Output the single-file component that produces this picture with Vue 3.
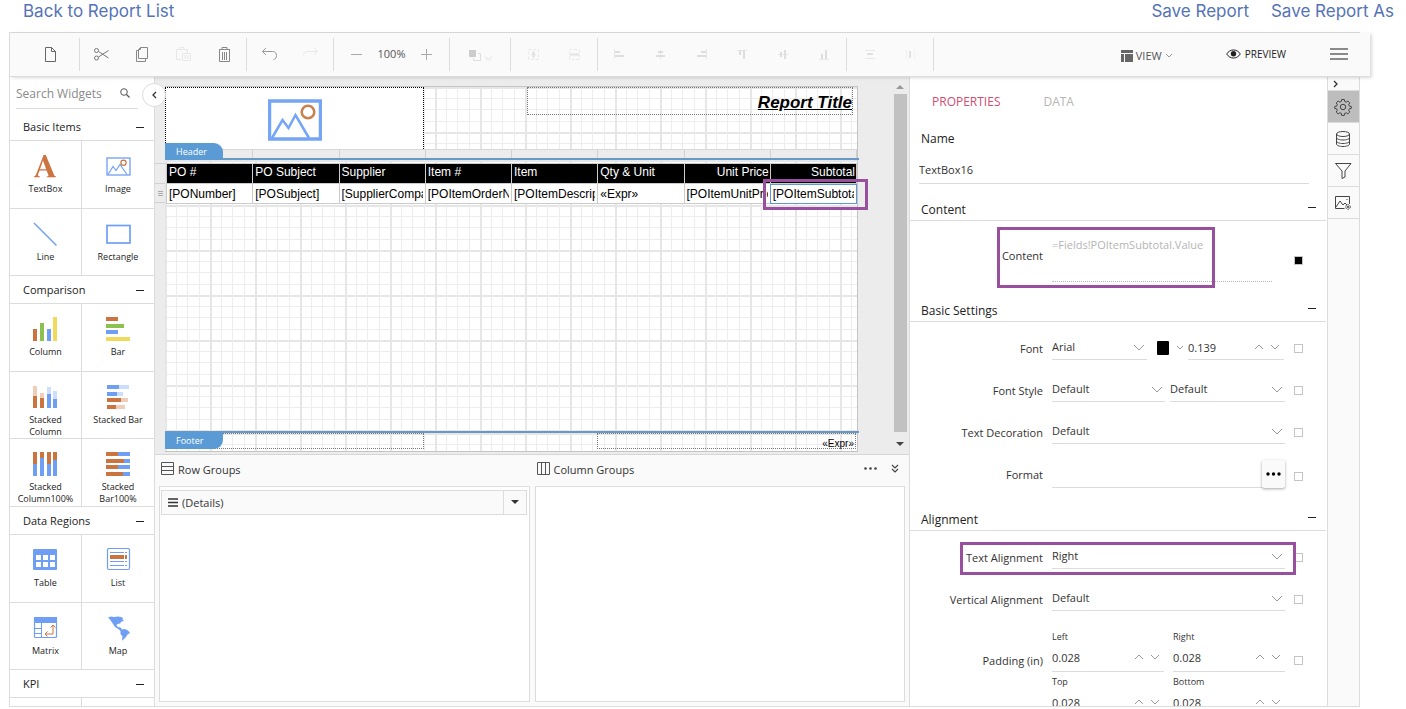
<script setup>
import { ref } from 'vue'

const B = '#6f9ff5'
const O = '#cc7440'

const svgBars = (items) => items.map(([x, y, w, h, c]) => `<rect x="${x}" y="${y}" width="${w}" height="${h}" fill="${c}"/>`).join('')

const widgetSections = [
  {
    title: 'Basic Items',
    items: [
      { name: 'TextBox', icon: `<path d="M10.600 1h2.200l8.400 20.200c.3.8.8 1.100 1.800 1.200v.9h-9.200v-.9c1.500 0 2-.4 1.500-1.600l-1.700-4.200H6.600L5.200 20c-.6 1.600-.1 2.300 1.800 2.400v.9H.8v-.9c1.300-.2 1.800-.8 2.500-2.400zM10 6.600l-3 8.600h6.200z" fill="${O}"/>` },
      { name: 'Image', icon: `<g fill="none" stroke="${B}"><rect x="1" y="4" width="23" height="17" stroke-width="1.300"/><path d="M2 20.500l5-8 3 4 4-6 7 10" stroke-width="1.200"/></g><circle cx="17.500" cy="8.800" r="2.600" fill="none" stroke="${O}" stroke-width="1.200"/>` },
      { name: 'Line', icon: `<path d="M1 1L23.500 23.500" stroke="${B}" stroke-width="1.500"/>` },
      { name: 'Rectangle', icon: `<rect x="1" y="3.500" width="23" height="17.500" fill="none" stroke="${B}" stroke-width="1.700"/>` }
    ]
  },
  {
    title: 'Comparison',
    items: [
      { name: 'Column', icon: svgBars([[0, 12, 4, 12, O], [7, 6, 4, 18, '#8cc152'], [14, 12, 4, 12, B], [20, 0, 4, 24, '#f1d95b']]) },
      { name: 'Bar', icon: svgBars([[0, 0, 12, 4, O], [0, 7, 18, 4, '#8cc152'], [0, 13, 12, 4, B], [0, 20, 24, 4, '#f1d95b']]) },
      { name: 'Stacked Column', icon: svgBars([[0, 1, 4, 10, '#efcdb9'], [0, 11, 4, 12, O], [7, 8, 4, 5, '#efcdb9'], [7, 13, 4, 10, O], [14, 2, 4, 8, '#cdddfc'], [14, 9, 4, 14, B], [20, 6, 4, 8, '#cdddfc'], [20, 14, 4, 9, B]]) },
      { name: 'Stacked Bar', icon: svgBars([[1, 0, 12, 4, B], [13, 0, 10, 4, '#cdddfc'], [1, 7, 10, 4, B], [11, 7, 6, 4, '#cdddfc'], [1, 13, 14, 4, O], [15, 13, 7, 4, '#efcdb9'], [1, 20, 9, 4, O], [10, 20, 9, 4, '#efcdb9']]) },
      { name: 'Stacked Column100%', icon: svgBars([[0, 0, 4, 12, O], [0, 12, 4, 12, B], [7, 0, 4, 6, O], [7, 6, 4, 18, B], [14, 0, 4, 12, O], [14, 12, 4, 12, B], [20, 0, 4, 8, O], [20, 8, 4, 16, B]]) },
      { name: 'Stacked Bar100%', icon: svgBars([[0, 0, 12, 4, O], [12, 0, 12, 4, B], [0, 7, 18, 4, O], [18, 7, 6, 4, B], [0, 13, 12, 4, O], [12, 13, 12, 4, B], [0, 20, 17, 4, O], [17, 20, 7, 4, B]]) }
    ]
  },
  {
    title: 'Data Regions',
    items: [
      { name: 'Table', icon: `<rect x="0" y="1" width="24" height="21" rx="1" fill="${B}"/>` + svgBars([[3, 7, 5, 5, '#fff'], [10, 7, 5, 5, '#fff'], [17, 7, 5, 5, '#fff'], [3, 14, 5, 5, '#fff'], [10, 14, 5, 5, '#fff'], [17, 14, 5, 5, '#fff']]) },
      { name: 'List', icon: `<rect x="1.500" y="0.500" width="22" height="21" rx="1.500" fill="none" stroke="${B}" stroke-width="1.200"/>` + svgBars([[4, 4, 14, 1, B], [19, 4, 2, 1, B], [4, 7, 14, 4, O], [19, 7, 2, 4, O], [4, 13, 14, 1, B], [19, 13, 2, 1, B], [4, 17, 14, 1, B], [19, 17, 2, 1, B]]) },
      { name: 'Matrix', icon: `<rect x="1.500" y="1.500" width="22" height="20" rx="1" fill="none" stroke="${B}" stroke-width="1.200"/><path d="M1 1h23v6H1z" fill="${B}"/><path d="M8.500 7v15M1 12.500h7.500M1 17.500h7.500" stroke="${B}"/><path d="M20 9v9h-8M17.500 11.500L20 9l2.500 2.500M14.500 15.500L12 18l2.500 2.500" fill="none" stroke="${O}"/>` },
      { name: 'Map', icon: `<path d="M2 1.500l3-1 3 .5 4-.5 3 .5 2 1-.5 1.500 1.500 1.500-2.500.5-1.500 2-2.500.5-1 1.500 1.500 1.500 2.500.5 1.500 2 3-.5 3 1.500 2 2.500-2.500 1.500-1.500 2.500-3 3-1 .5.500-4-2-2.500v-3l-1.500-1.500-4-2.500-2-3L4 3.500z" fill="${B}"/>` }
    ]
  },
  { title: 'KPI', items: [{ name: '', icon: '' }, { name: '', icon: '' }] }
]

const toolGroups = [
  { cls: 'first', tools: [{ name: 'New', icon: '<path d="M3.500 1.500h6l4 4v10h-10zM9.500 1.500v4h4" stroke="#666"/>' }] },
  {
    cls: 'edit',
    tools: [
      { name: 'Cut', icon: '<g stroke="#777"><circle cx="3.500" cy="4.500" r="2"/><circle cx="3.500" cy="12" r="2"/><path d="M5.500 5.500l10 6.500M5.500 11l10-6.500"/></g>' },
      { name: 'Copy', icon: '<path d="M6.500 1.500h7v11h-9v-9zM6.500 1.500v2h-2M4.500 4.500h-2v11h9v-3" stroke="#888"/>' },
      { name: 'Paste', icon: '<path d="M6 13.500H1.500v-10h11V7M5 3.500v-2h4v2M7.500 7.500h8v7h-8zM9 10h5M9 12h5" stroke="#e8e8e8"/>' },
      { name: 'Delete', icon: '<path d="M3 3.500h11M6 3.500v-2h5v2M3.500 4v11.500h10V4M6.500 6v8M8.500 6v8M10.500 6v8" stroke="#888"/>' }
    ]
  },
  {
    tools: [
      { name: 'Undo', icon: '<path d="M5 2L1.500 5.500 5 9M1.500 5.500h10c3 0 4 2 4 4s-1 4-3 4" stroke="#999"/>' },
      { name: 'Redo', icon: '<path d="M12 2l3.500 3.500L12 9M15.500 5.500h-10c-3 0-4 2-4 4" stroke="#e8e8e8"/>' }
    ]
  },
  {
    zoom: true,
    tools: [
      { name: 'Zoom out', icon: '<path d="M3 8.500h11" stroke="#aaa"/>' },
      { name: 'Zoom in', icon: '<path d="M3 8.500h11M8.500 3v11" stroke="#aaa"/>' }
    ]
  },
  { cls: 'order', tools: [{ name: 'Order', icon: '<path d="M1 4h7v7H1z" fill="#ccc"/><path d="M10 7.500h2.500v7h-7V12M17 10.500l3.500 3.500 3.500-3.500" stroke="#dedede"/>', wide: true }] },
  {
    tools: [
      { name: 'Center horizontally', icon: '<path d="M3.500 3.500h10v10h-10z" stroke="#e8e8e8" stroke-dasharray="3 2"/><path d="M8.500 5v7M6.500 8.500h4" stroke="#e2e2e2" stroke-width="2"/>' },
      { name: 'Center vertically', icon: '<path d="M3.500 3.500h10v10h-10z" stroke="#e8e8e8" stroke-dasharray="3 2"/><path d="M4 8.500h9" stroke="#e2e2e2" stroke-width="2"/>' }
    ]
  },
  {
    cls: 'six',
    tools: [
      { name: 'Align left', icon: '<path d="M3.500 3v10" stroke="#e8e8e8"/><path d="M4 6h5M4 10h9" stroke="#dedede" stroke-width="2"/>' },
      { name: 'Align center', icon: '<path d="M8.500 4v9" stroke="#e8e8e8"/><path d="M6 6h5M4 10h9" stroke="#dedede" stroke-width="2"/>' },
      { name: 'Align right', icon: '<path d="M13.500 3v10" stroke="#e8e8e8"/><path d="M8 6h5M4 10h9" stroke="#dedede" stroke-width="2"/>' },
      { name: 'Align top', icon: '<path d="M3 4.500h10" stroke="#e8e8e8"/><path d="M6 4v5M10 4v9" stroke="#dedede" stroke-width="2"/>' },
      { name: 'Align middle', icon: '<path d="M3 8.500h11" stroke="#e8e8e8"/><path d="M6 6v5M10 4v9" stroke="#dedede" stroke-width="2"/>' },
      { name: 'Align bottom', icon: '<path d="M3 13.500h10" stroke="#e8e8e8"/><path d="M6 8v5M10 4v9" stroke="#dedede" stroke-width="2"/>' }
    ]
  },
  {
    tools: [
      { name: 'Distribute vertically', icon: '<path d="M4 4.500h10M4 12.500h10" stroke="#e8e8e8"/><path d="M6 8h6" stroke="#e2e2e2" stroke-width="2"/>' },
      { name: 'Distribute horizontally', icon: '<path d="M4.500 4v9M12.500 4v9" stroke="#f0f0f0"/><path d="M8 5v7" stroke="#e2e2e2" stroke-width="2"/>' }
    ]
  }
]

const columns = [
  { head: 'PO #', value: '[PONumber]' },
  { head: 'PO Subject', value: '[POSubject]' },
  { head: 'Supplier', value: '[SupplierCompa' },
  { head: 'Item #', value: '[POItemOrderN' },
  { head: 'Item', value: '[POItemDescrip' },
  { head: 'Qty & Unit', value: '«Expr»' },
  { head: 'Unit Price', value: '[POItemUnitPric', right: true },
  { head: 'Subtotal', value: '[POItemSubtota', right: true, selected: true }
]

const sideTabs = [
  { name: 'Properties', active: true, icon: '<circle cx="9" cy="9" r="2.700"/><path d="M7.700 1.500h2.600l.4 2 1.500.6 1.700-1.100 1.900 1.900-1.100 1.700.6 1.500 2 .4v1.900l-2 .4-.6 1.500 1.100 1.700-1.900 1.900-1.700-1.100-1.500.6-.4 2H7.700l-.4-2-1.500-.6-1.700 1.100-1.900-1.900 1.100-1.700-.6-1.500-2-.4V8.500l2-.4.6-1.500-1.100-1.700 1.900-1.900 1.700 1.100 1.500-.6z"/>' },
  { name: 'Data', icon: '<ellipse cx="9" cy="4" rx="6.500" ry="2.500"/><path d="M2.500 4v10c0 1.400 2.900 2.500 6.500 2.500s6.500-1.100 6.500-2.500V4M2.500 7.500C2.500 9 5.400 10 9 10s6.500-1 6.500-2.500M2.500 11c0 1.500 2.900 2.500 6.500 2.500s6.500-1 6.500-2.500"/>' },
  { name: 'Filters', icon: '<path d="M1.500 1.500h15.500l-6 7.500v6l-3 1.500V9z"/>' },
  { name: 'Image manager', icon: '<path d="M10.500 14.500H1.500v-12h14V10M2 13l4-6 3 4 2-2 2 2"/><path d="M12.500 5.500h1"/><circle cx="14" cy="13" r="2.300" stroke-dasharray="1.500 .8"/><circle cx="14" cy="13" r=".8"/>' }
]

const name = ref('TextBox16')
const content = ref('=Fields!POItemSubtotal.Value')
const fontSize = ref('0.139')
const format = ref('')
const padding = ref([
  { side: 'Left', value: '0.028' },
  { side: 'Right', value: '0.028' },
  { side: 'Top', value: '0.028' },
  { side: 'Bottom', value: '0.028' }
])
</script>

<template>
  <div class="page">
    <nav class="links">
      <a href="#">Back to Report List</a>
      <a href="#" class="save">Save Report</a>
      <a href="#">Save Report As</a>
    </nav>

    <main class="designer">
      <header class="toolbar">
        <div v-for="(group, g) in toolGroups" :key="g" class="group" :class="group.cls">
          <template v-for="(tool, t) in group.tools" :key="tool.name">
            <span v-if="group.zoom && t === 1" class="zoom">100%</span>
            <button class="tool" :aria-label="tool.name">
              <svg :width="tool.wide ? 26 : 17" height="17" :viewBox="tool.wide ? '0 0 26 17' : '0 0 17 17'" fill="none" v-html="tool.icon"></svg>
            </button>
          </template>
        </div>
        <button class="view">
          <svg width="12" height="12" viewBox="0 0 12 12"><path d="M0 0h12v3H0zM0 4h3v8H0zM4 4h8v8H4z" fill="#666" /></svg>
          <span>VIEW</span>
          <svg width="8" height="6" viewBox="0 0 8 6" fill="none"><path d="M1 1l3 3 3-3" stroke="#999" /></svg>
        </button>
        <button class="preview">
          <svg width="15" height="10" viewBox="0 0 15 10" fill="none"><path d="M.7 5C4-.4 11-.4 14.300 5 11 10.400 4 10.400.7 5z" stroke="#222" /><circle cx="7.500" cy="4.700" r="2.700" fill="#222" /></svg>
          <span>PREVIEW</span>
        </button>
        <button class="menu" aria-label="Menu">
          <svg width="18" height="12" viewBox="0 0 18 12"><path d="M0 1h18M0 6h18M0 11h18" stroke="#666" stroke-width="1.500" /></svg>
        </button>
      </header>

      <div class="body">
        <aside class="widgets">
          <div class="widget-list">
            <div class="search">
              <input type="text" placeholder="Search Widgets" aria-label="Search Widgets" />
              <svg width="10" height="10" viewBox="0 0 10 10" fill="none" stroke="#555"><circle cx="4" cy="4" r="3.300" /><path d="M6.500 6.500L9.500 9.500" stroke-width="1.300" /></svg>
            </div>
            <section v-for="section in widgetSections" :key="section.title">
              <button class="section-head"><span>{{ section.title }}</span><i class="minus"></i></button>
              <div class="cells">
                <div v-for="(item, i) in section.items" :key="i" class="cell">
                  <svg width="25" height="25" viewBox="0 0 25 25" v-html="item.icon"></svg>
                  <span>{{ item.name }}</span>
                </div>
              </div>
            </section>
          </div>
          <button class="collapse" aria-label="Collapse widgets">
            <svg width="6" height="8" viewBox="0 0 6 8" fill="none"><path d="M5 1L2 4l3 3" stroke="#333" stroke-width="1.300" /></svg>
          </button>
        </aside>

        <div class="center">
          <div class="canvas">
            <div class="gutter"><div class="row-handles"><span></span><span class="grip"></span></div></div>
            <div class="paper">
              <div class="band header-band grid">
                <div class="logo">
                  <svg width="54" height="42" viewBox="0 0 54 42" fill="none">
                    <rect x="1.500" y="2" width="51" height="38" stroke="#76a5f5" stroke-width="3.500" />
                    <path d="M4 39l10.500-18 6 8L27.500 16 41 39" stroke="#76a5f5" stroke-width="2.500" />
                    <circle cx="40" cy="13" r="6.300" stroke="#cc7f4b" stroke-width="2.500" />
                  </svg>
                </div>
                <div class="title">Report Title</div>
                <span class="tab top-tab">Header</span>
              </div>
              <div class="col-handles"><span v-for="c in columns" :key="c.head"></span></div>
              <div class="rule"></div>
              <div class="band body-band grid">
                <table>
                  <thead>
                    <tr><th v-for="c in columns" :key="c.head" :class="{ right: c.right }">{{ c.head }}</th></tr>
                  </thead>
                  <tbody>
                    <tr>
                      <td v-for="c in columns" :key="c.head" :class="{ selected: c.selected }">
                        <div>{{ c.value }}</div>
                        <i v-if="c.selected" class="mark cell-mark"></i>
                      </td>
                    </tr>
                  </tbody>
                </table>
              </div>
              <div class="rule"></div>
              <div class="band footer-band grid">
                <div class="foot-left"></div>
                <div class="foot-right">«Expr»</div>
                <span class="tab bottom-tab">Footer</span>
              </div>
            </div>
            <div class="scrollbar">
              <svg width="8" height="5" viewBox="0 0 8 5"><path d="M0 5l4-4 4 4z" fill="#999" /></svg>
              <i></i>
              <svg width="8" height="5" viewBox="0 0 8 5"><path d="M0 0l4 4 4-4z" fill="#444" /></svg>
            </div>
          </div>

          <div class="groups">
            <section class="group-pane">
              <h2>
                <svg width="13" height="13" viewBox="0 0 13 13" fill="none" stroke="#555"><path d="M.5.5h12v12H.5zM.5 4.500h12M.5 8.500h12" /></svg>
                <span>Row Groups</span>
              </h2>
              <div class="group-box">
                <div class="detail">
                  <svg width="10" height="9" viewBox="0 0 10 9"><path d="M0 1h10M0 4.500h10M0 8h10" stroke="#333" stroke-width="1.600" /></svg>
                  <span>(Details)</span>
                  <button aria-label="Group options"><svg width="8" height="5" viewBox="0 0 8 5"><path d="M0 0l4 4 4-4z" fill="#333" /></svg></button>
                </div>
              </div>
            </section>
            <section class="group-pane">
              <h2>
                <svg width="13" height="13" viewBox="0 0 13 13" fill="none" stroke="#555"><path d="M.5.5h12v12H.5zM4.500.5v12M8.500.5v12" /></svg>
                <span>Column Groups</span>
                <button class="more" aria-label="More"><svg width="13" height="3" viewBox="0 0 13 3" fill="#444"><circle cx="1.500" cy="1.500" r="1.300" /><circle cx="6.500" cy="1.500" r="1.300" /><circle cx="11.500" cy="1.500" r="1.300" /></svg></button>
                <button aria-label="Collapse groups"><svg width="8" height="9" viewBox="0 0 8 9" fill="none" stroke="#444" stroke-width="1.200"><path d="M1 1l3 3 3-3M1 5l3 3 3-3" /></svg></button>
              </h2>
              <div class="group-box"></div>
            </section>
          </div>
        </div>

        <aside class="properties">
          <div class="tabs">
            <button class="on">PROPERTIES</button>
            <button>DATA</button>
          </div>
          <label class="name-label" for="name">Name</label>
          <input id="name" v-model="name" class="name-input" type="text" />

          <button class="prop-head"><span>Content</span><i class="minus"></i></button>
          <div class="props content-props">
            <div class="row content-row">
              <label for="content">Content</label>
              <textarea id="content" v-model="content"></textarea>
              <input type="checkbox" checked aria-label="Content expression" />
              <i class="mark content-mark"></i>
            </div>
          </div>

          <button class="prop-head"><span>Basic Settings</span><i class="minus"></i></button>
          <div class="props basic-props">
            <div class="row">
              <label for="font">Font</label>
              <div class="controls font-controls">
                <span class="select"><select id="font"><option>Arial</option></select><svg width="12" height="7" viewBox="0 0 12 7"><path d="M1 1l5 5 5-5" /></svg></span>
                <button class="swatch" aria-label="Font color"><i></i><svg width="8" height="5" viewBox="0 0 8 5"><path d="M1 1l3 3 3-3" /></svg></button>
                <span class="spin"><input v-model="fontSize" type="text" aria-label="Font size" /><svg width="26" height="7" viewBox="0 0 26 7"><path d="M1 5l4-4 4 4M17 1l4 4 4-4" /></svg></span>
              </div>
              <input type="checkbox" aria-label="Font expression" />
            </div>
            <div class="row">
              <label for="style">Font Style</label>
              <div class="controls style-controls">
                <span class="select"><select id="style"><option>Default</option></select><svg width="12" height="7" viewBox="0 0 12 7"><path d="M1 1l5 5 5-5" /></svg></span>
                <span class="select"><select aria-label="Font weight"><option>Default</option></select><svg width="12" height="7" viewBox="0 0 12 7"><path d="M1 1l5 5 5-5" /></svg></span>
              </div>
              <input type="checkbox" aria-label="Font style expression" />
            </div>
            <div class="row">
              <label for="decoration">Text Decoration</label>
              <div class="controls">
                <span class="select"><select id="decoration"><option>Default</option></select><svg width="12" height="7" viewBox="0 0 12 7"><path d="M1 1l5 5 5-5" /></svg></span>
              </div>
              <input type="checkbox" aria-label="Text decoration expression" />
            </div>
            <div class="row format-row">
              <label for="format">Format</label>
              <div class="controls format-controls">
                <input id="format" v-model="format" type="text" />
                <button class="dots" aria-label="Edit format"><svg width="15" height="4" viewBox="0 0 15 4"><circle cx="2" cy="2" r="1.700" /><circle cx="7.500" cy="2" r="1.700" /><circle cx="13" cy="2" r="1.700" /></svg></button>
              </div>
              <input type="checkbox" aria-label="Format expression" />
            </div>
          </div>

          <button class="prop-head"><span>Alignment</span><i class="minus"></i></button>
          <div class="props">
            <div class="row">
              <label for="align">Text Alignment</label>
              <div class="controls">
                <span class="select"><select id="align"><option>Right</option></select><svg width="12" height="7" viewBox="0 0 12 7"><path d="M1 1l5 5 5-5" /></svg></span>
              </div>
              <input type="checkbox" aria-label="Text alignment expression" />
              <i class="mark align-mark"></i>
            </div>
            <div class="row">
              <label for="valign">Vertical Alignment</label>
              <div class="controls">
                <span class="select"><select id="valign"><option>Default</option></select><svg width="12" height="7" viewBox="0 0 12 7"><path d="M1 1l5 5 5-5" /></svg></span>
              </div>
              <input type="checkbox" aria-label="Vertical alignment expression" />
            </div>
            <div class="row padding-row">
              <label for="pad-Left">Padding (in)</label>
              <div class="pads">
                <div v-for="pad in padding" :key="pad.side" class="pad">
                  <label :for="'pad-' + pad.side">{{ pad.side }}</label>
                  <span class="spin"><input :id="'pad-' + pad.side" v-model="pad.value" type="text" /><svg width="26" height="7" viewBox="0 0 26 7"><path d="M1 5l4-4 4 4M17 1l4 4 4-4" /></svg></span>
                </div>
              </div>
              <input type="checkbox" aria-label="Padding expression" />
            </div>
          </div>
        </aside>

        <nav class="strip">
          <button class="expand" aria-label="Collapse properties"><svg width="6" height="8" viewBox="0 0 6 8" fill="none"><path d="M1 1l3 3-3 3" stroke="#333" stroke-width="1.300" /></svg></button>
          <button v-for="tab in sideTabs" :key="tab.name" class="side" :class="{ active: tab.active }" :aria-label="tab.name">
            <svg width="18" height="18" viewBox="0 0 18 18" fill="none" stroke="#444" v-html="tab.icon"></svg>
          </button>
        </nav>
      </div>
    </main>
  </div>
</template>

<style>
body {
  background: #fff;
}
</style>

<style scoped>
* {
  box-sizing: border-box;
}
button,
input,
select,
textarea {
  margin: 0;
  padding: 0;
  border: 0;
  border-radius: 0;
  background: none;
  color: inherit;
  font: inherit;
  outline: 0;
}
svg {
  display: block;
  flex: none;
}
.page {
  display: flex;
  flex-direction: column;
  height: 100vh;
  font: 11px/16px "Open Sans", "Noto Sans", sans-serif;
  color: #333;
}
.links {
  display: flex;
  gap: 22px;
  height: 32px;
  padding: 0 12px 0 23px;
  font: 17px/22px Inter, sans-serif;
}
.links a {
  color: #5573b7;
  text-decoration: none;
}
.save {
  margin-left: auto;
}
.designer {
  flex: 1;
  min-height: 0;
  display: flex;
  flex-direction: column;
  margin: 0 46px 2px 9px;
  border: 1px solid #dcdcdc;
}
.toolbar {
  position: relative;
  z-index: 2;
  display: flex;
  align-items: center;
  flex: none;
  height: 44px;
  margin-right: -11px;
  padding-bottom: 1px;
  background: #fafafa;
  border-bottom: 1px solid #dcdcdc;
  box-shadow: 2px 1px 3px rgba(0, 0, 0, 0.15);
}
.group {
  display: flex;
  align-items: center;
  height: 33px;
  padding: 0 2px;
  border-right: 1px solid #dcdcdc;
}
.first {
  padding: 0 8px 0 20px;
}
.edit,
.six {
  padding: 0 1px;
}
.order {
  padding: 0 1px 0 18px;
}
.tool {
  display: flex;
  justify-content: center;
  width: 41px;
}
.order .tool {
  justify-content: flex-start;
}
.zoom {
  width: 29px;
  text-align: center;
  white-space: nowrap;
  color: #555;
}
.view,
.preview {
  display: flex;
  align-items: center;
  gap: 4px;
  color: #555;
}
.view {
  margin-left: auto;
  padding-top: 3px;
  gap: 3px;
}
.preview {
  margin: 0 44px 0 53px;
  color: #222;
  font-size: 10px;
}
.menu {
  margin-right: 22px;
}
.body {
  flex: 1;
  min-height: 0;
  display: flex;
}
.widgets {
  position: relative;
  z-index: 1;
  flex: none;
  width: 145px;
  border-right: 1px solid #dcdcdc;
}
.widget-list {
  height: 100%;
  overflow: hidden;
}
.search {
  display: flex;
  align-items: center;
  width: 122px;
  height: 32px;
  margin: 0 0 3px 6px;
  padding-right: 8px;
  border-bottom: 1px solid #dcdcdc;
}
.search input {
  flex: 1;
  min-width: 0;
  padding-top: 2px;
  font-size: 12px;
}
.search input::placeholder {
  color: #8a8a8a;
}
.section-head {
  display: flex;
  align-items: center;
  justify-content: space-between;
  width: 100%;
  height: 28px;
  padding: 2px 10px 0 13px;
}
.section-head,
.prop-head {
  color: #222;
}
.minus {
  width: 8px;
  height: 1px;
  background: #222;
}
.cells {
  display: grid;
  grid-template-columns: 1fr 1fr;
  grid-auto-rows: 68px 67px;
  border-bottom: 1px solid #dcdcdc;
  margin-bottom: -1px;
}
.cell {
  display: flex;
  flex-direction: column;
  align-items: center;
  gap: 4px;
  padding: 13px 2px 0;
  border-top: 1px solid #dcdcdc;
  font-size: 9px;
  line-height: 12px;
  text-align: center;
  color: #222;
}
.cell:nth-child(odd) {
  border-right: 1px solid #dcdcdc;
}
.cell span {
  max-width: 60px;
}
.collapse {
  position: absolute;
  top: 6px;
  right: -12px;
  display: flex;
  align-items: center;
  justify-content: center;
  width: 24px;
  height: 24px;
  border: 1px solid #dcdcdc;
  border-radius: 12px;
  background: #fff;
}
.center {
  flex: 1;
  min-width: 0;
  display: flex;
  flex-direction: column;
  border-right: 1px solid #dcdcdc;
}
.canvas {
  flex: 1;
  min-height: 0;
  display: flex;
  padding-top: 9px;
  background: #ececec;
  border-bottom: 1px solid #d6d6d6;
  font-family: "Liberation Sans", Arial, sans-serif;
}
.gutter {
  flex: none;
  width: 10px;
  padding-top: 77px;
}
.row-handles span {
  display: flex;
  height: 20px;
  border-top: 1px solid #d0d0d0;
}
.row-handles .grip {
  border-bottom: 1px solid #d0d0d0;
}
.grip::after {
  content: "";
  width: 5px;
  height: 5px;
  margin: 7px 0 0 3px;
  background: repeating-linear-gradient(#aaa 0 1px, transparent 1px 2px);
}
.paper {
  flex: none;
  display: flex;
  flex-direction: column;
  width: 693px;
  margin-bottom: 2px;
  background: #fff;
  border: 1px solid #c4c4c4;
  border-width: 1px 1px 1px 0;
}
.grid {
  background-color: #fff;
  background-image:
    linear-gradient(to right, #e6e6e6 0 2px, transparent 2px 11px, #ededed 11px 12px, transparent 12px 22px, #ededed 22px 23px, transparent 23px 34px, #ededed 34px 35px, transparent 35px),
    linear-gradient(to bottom, #e6e6e6 0 2px, transparent 2px 11px, #ededed 11px 12px, transparent 12px 22px, #ededed 22px 23px, transparent 23px 34px, #ededed 34px 35px, transparent 35px);
  background-size: 45px 45px;
}
.band {
  position: relative;
  display: flex;
  justify-content: space-between;
}
.header-band {
  align-items: flex-start;
  height: 62px;
}
.logo {
  display: flex;
  justify-content: center;
  width: 259px;
  height: 62px;
  padding-top: 11px;
  background: #fff;
  border: 1px dotted #000;
  border-bottom: 0;
}
.title {
  width: 326px;
  height: 28px;
  margin-right: 4px;
  border: 1px dotted #777;
  color: #000;
  font: italic bold 17px/30px "Liberation Sans", Arial, sans-serif;
  text-align: right;
  text-decoration: underline;
}
.tab {
  position: absolute;
  left: 0;
  width: 58px;
  height: 17px;
  padding-left: 11px;
  background: #5b9bd5;
  color: #fff;
  font: 9px/17px "Open Sans", "Noto Sans", sans-serif;
}
.top-tab {
  top: 56px;
  height: 18px;
  border-radius: 0 9px 0 0;
}
.bottom-tab {
  top: -1px;
  border-radius: 0 0 9px 0;
}
.col-handles {
  display: flex;
  height: 9px;
  padding-left: 2px;
  background: #ececec;
  border-top: 1px solid #d8d8d8;
}
.col-handles span {
  flex: 1;
  border-right: 1px solid #d0d0d0;
}
.rule {
  flex: none;
  height: 2px;
  margin-right: -2px;
  background: #6699c6;
}
.body-band {
  flex: 1;
  padding: 3px 0 0 1px;
}
table {
  width: 100%;
  height: 41px;
  table-layout: fixed;
  border-collapse: collapse;
  align-self: flex-start;
  color: #000;
  font-size: 12px;
}
th,
td {
  position: relative;
  height: 20px;
  padding: 0 2px;
  border: 1px solid #ccc;
  font-weight: 400;
  line-height: 17px;
  text-align: left;
  vertical-align: top;
  white-space: nowrap;
}
th {
  background: #000;
  color: #fff;
}
th.right {
  text-align: right;
  padding: 0 1px;
}
td {
  background: #fff;
}
td div {
  padding-top: 2px;
  overflow: hidden;
}
td.selected {
  outline: 1px solid #5b9bd5;
  outline-offset: -1px;
}
.mark {
  position: absolute;
  border: 3px solid #984f9d;
  pointer-events: none;
}
.cell-mark {
  inset: -5px -12px -7px -8px;
  z-index: 1;
}
.footer-band {
  height: 18px;
}
.foot-left {
  width: 259px;
  height: 16px;
  border: 1px dotted #777;
}
.foot-right {
  width: 259px;
  height: 16px;
  margin-right: 1px;
  padding-right: 1px;
  border: 1px dotted #777;
  color: #000;
  font-size: 10px;
  line-height: 20px;
  text-align: right;
}
.scrollbar {
  display: flex;
  flex-direction: column;
  align-items: center;
  width: 14px;
  margin: -2px 2px 7px auto;
  gap: 5px;
}
.scrollbar i {
  flex: 1;
  width: 13px;
  background: #c1c1c1;
}
.scrollbar svg:last-child {
  margin-top: 5px;
}
.groups {
  display: flex;
  gap: 5px;
  flex: none;
  height: 251px;
  padding: 0 4px 4px;
  background: #fafafa;
}
.group-pane {
  flex: 1;
  display: flex;
  flex-direction: column;
}
.group-pane h2 {
  display: flex;
  align-items: center;
  gap: 4px;
  height: 31px;
  margin: 0;
  padding: 0 6px 5px 2px;
  font-size: 11px;
  font-weight: 400;
}
.group-pane h2 span {
  padding-top: 3px;
}
.more {
  margin: 0 10px 0 auto;
}
.group-box {
  flex: 1;
  padding: 3px 2px 3px 1px;
  background: #fff;
  border: 1px solid #dcdcdc;
}
.detail {
  display: flex;
  align-items: center;
  gap: 4px;
  height: 25px;
  padding-left: 6px;
  background: #fafafa;
  border: 1px solid #dcdcdc;
}
.detail button {
  display: flex;
  align-items: center;
  justify-content: center;
  align-self: stretch;
  width: 23px;
  margin-left: auto;
  border-left: 1px solid #dcdcdc;
}
.properties {
  flex: none;
  display: flex;
  flex-direction: column;
  width: 417px;
  overflow: hidden;
}
.tabs {
  display: flex;
  flex: none;
  gap: 43px;
  height: 48px;
  padding: 1px 0 0 22px;
  font-size: 12px;
  color: #b5b5b5;
}
.tabs .on {
  color: #cf4d6f;
}
.name-label {
  flex: none;
  height: 28px;
  padding-left: 11px;
  font-size: 12px;
  line-height: 28px;
  font-weight: 500;
  color: #222;
}
.name-input {
  flex: none;
  height: 31px;
  margin: 0 18px 15px 9px;
  padding-top: 3px;
  border-bottom: 1px solid #dcdcdc;
}
.prop-head {
  display: flex;
  flex: none;
  align-items: center;
  justify-content: space-between;
  height: 22px;
  margin-right: 1px;
  padding: 0 10px 0 11px;
  border-bottom: 1px solid #dcdcdc;
  font-size: 12px;
  font-weight: 500;
}
.prop-head .minus {
  margin-bottom: 4px;
}
.props {
  flex: none;
}
.content-props {
  padding-bottom: 18px;
}
.basic-props {
  padding-bottom: 21px;
}
.row {
  position: relative;
  display: grid;
  grid-template-columns: 133px 233px 9px;
  column-gap: 9px;
  align-items: end;
  height: 42px;
}
.row:first-child {
  height: 38px;
}
.row > label {
  text-align: right;
  line-height: 22px;
}
.row > input[type="checkbox"] {
  appearance: none;
  width: 9px;
  height: 9px;
  margin-bottom: 7px;
  border: 1px solid #c4c4c4;
}
.row > input[type="checkbox"]:checked {
  background: #000;
}
.row.content-row {
  height: 61px;
  align-items: center;
}
.content-row > label {
  padding-top: 9px;
}
.content-row > input[type="checkbox"] {
  margin: 17px 0 0;
}
.content-row textarea {
  display: block;
  width: 220px;
  height: 61px;
  padding-top: 16px;
  border-bottom: 1px dotted #bbb;
  color: #b5b5b5;
  resize: none;
  overflow: hidden;
}
.content-mark {
  inset: 6px 112px -6px 87px;
}
.align-mark {
  inset: 11px 31px -6px 50px;
}
.controls {
  display: grid;
  grid-template-columns: 1fr;
}
.font-controls {
  grid-template-columns: 95px 33px 96px;
  column-gap: 4px;
}
.style-controls {
  grid-template-columns: 113px 115px;
  column-gap: 5px;
}
.select,
.spin {
  display: flex;
  align-items: center;
  height: 25px;
  border-bottom: 1px solid #dcdcdc;
}
.select select,
.spin input {
  appearance: none;
  flex: 1;
  min-width: 0;
  height: 24px;
}
.select svg {
  margin: 0 2px 0 -12px;
  pointer-events: none;
}
.spin svg {
  margin-right: 4px;
}
.select svg,
.spin svg,
.swatch svg {
  fill: none;
  stroke: #999;
}
.swatch {
  display: flex;
  align-items: center;
  gap: 7px;
  padding-left: 6px;
}
.swatch i {
  width: 14px;
  height: 14px;
  background: #000;
  border-radius: 1px;
}
.format-controls {
  position: relative;
}
.row.format-row {
  height: 44px;
}
.format-row > label {
  padding-bottom: 2px;
}
.format-controls input {
  height: 25px;
  border-bottom: 1px solid #dcdcdc;
}
.dots {
  position: absolute;
  right: 0;
  bottom: 0;
  display: flex;
  align-items: center;
  justify-content: center;
  width: 23px;
  height: 28px;
  background: #fafafa;
  border-radius: 2px;
  box-shadow: 0 1px 3px rgba(0, 0, 0, 0.35);
}
.row.padding-row {
  height: auto;
  align-items: start;
}
.padding-row > label {
  padding-top: 39px;
}
.padding-row > input[type="checkbox"] {
  margin-top: 45px;
}
.pads {
  display: grid;
  grid-template-columns: minmax(0, 1fr) minmax(0, 1fr);
  column-gap: 9px;
  padding-top: 19px;
}
.pad label {
  display: block;
  font-size: 9px;
  line-height: 14px;
}
.pad .spin {
  height: 28px;
  margin-bottom: 3px;
}
.strip {
  flex: none;
  width: 33px;
  margin-right: -1px;
  background: #fafafa;
  border: 1px solid #dcdcdc;
  border-width: 0 1px;
}
.strip button {
  display: flex;
  align-items: center;
  justify-content: center;
  width: 100%;
  height: 32px;
  padding-right: 2px;
  border-bottom: 1px solid #dcdcdc;
}
.strip .expand {
  justify-content: flex-start;
  height: 14px;
  padding-left: 5px;
}
.strip .active {
  background: #bdbdbd;
}
</style>
